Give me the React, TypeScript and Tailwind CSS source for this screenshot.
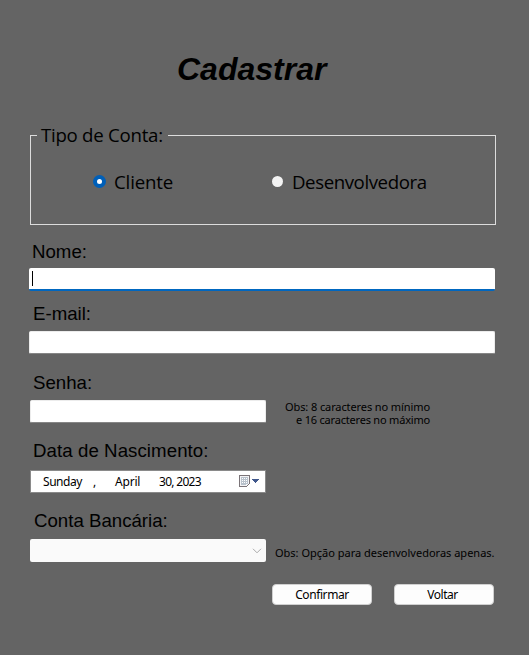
import { ReactNode } from "react";

const arial = "font-['Liberation_Sans',Arial,sans-serif]";
const segoe = "font-['Open_Sans','Noto_Sans',sans-serif]";
const tahoma = "font-['Noto_Sans','Open_Sans',sans-serif]";

function Label({ children, className }: { children: ReactNode; className: string }) {
  return (
    <label className={`${arial} block h-6 whitespace-nowrap text-[18.67px] leading-6 ${className}`}>
      {children}
    </label>
  );
}

function CalendarIcon() {
  return (
    <svg width="22" height="14" viewBox="0 0 22 14" shapeRendering="crispEdges">
      <path d="M1 1H10V9L8 11H1Z" fill="#f4f4f6" />
      <path d="M0 0H11V1H0ZM0 1H1V12H0ZM10 1H11V9H10ZM1 11H8V12H1ZM8 10H9V11H8ZM9 9H10V10H9Z" fill="#7b7478" />
      <path d="M2 2H9V9H7V10H2Z" fill="#b9c2cc" />
      <path d="M3 3H4V4H3ZM5 3H6V4H5ZM7 3H8V4H7ZM3 5H4V6H3ZM5 5H6V6H5ZM7 5H8V6H7ZM3 7H4V8H3ZM5 7H6V8H5ZM7 7H8V8H7Z" fill="#fff" />
      <path d="M13 4H20V5H13ZM14 5H19V6H14ZM15 6H18V7H15ZM16 7H17V8H16Z" fill="#40588c" />
    </svg>
  );
}

export default function App() {
  return (
    <main className="flex h-[655px] w-[529px] flex-col overflow-hidden bg-[#646464] text-black">
      <h1 className={`${arial} ml-[177px] mt-[49px] h-10 text-[32px] font-bold italic leading-10`}>
        Cadastrar
      </h1>

      <section className="ml-[30px] mt-[34px] w-[466px]">
        <div className="flex h-6 items-center">
          <span className="mt-[12px] h-[12px] w-[7px] border-l border-t border-[#dcdcdc]" />
          <span className={`${segoe} w-[131px] whitespace-nowrap pl-1 text-[18.67px] leading-6 tracking-[-0.27px]`}>
            Tipo de Conta:
          </span>
          <span className="mt-[12px] h-[12px] flex-1 border-r border-t border-[#dcdcdc]" />
        </div>
        <div className={`${segoe} flex h-[78px] border-x border-b border-[#dcdcdc] pt-[23px] text-[18.67px] leading-6`}>
          <div className="ml-[62px] flex h-6 w-[178px]">
            <span className="mt-[5px] flex size-[13px] items-center justify-center rounded-full bg-[#005fb8]">
              <span className="size-[5px] rounded-full bg-white" />
            </span>
            <span className="ml-[8px] tracking-[-0.15px]">Cliente</span>
          </div>
          <div className="flex h-6">
            <span className="ml-[1px] mt-[6px] size-[11px] rounded-full bg-[#f3f3f3]" />
            <span className="ml-[9px] tracking-[-0.42px]">Desenvolvedora</span>
          </div>
        </div>
      </section>

      <Label className="ml-8 mt-[15px]">Nome:</Label>
      <div className="ml-[29px] mt-[4px] h-[23px] w-[466px] rounded-[2px] border-b-2 border-[#0067c0] bg-white pl-[3px] pt-[3px]">
        <div className="h-[15px] w-px bg-black" />
      </div>

      <Label className="ml-[33px] mt-[11px]">E-mail:</Label>
      <div className="ml-[29px] mt-[5px] h-[23px] w-[466px] rounded-[2px] border border-[#ececec] border-b-[#868686] bg-white" />

      <Label className="ml-[33px] mt-[17px]">Senha:</Label>
      <div className="ml-[30px] mt-[5px] flex h-[28px]">
        <div className="h-[23px] w-[236px] rounded-[2px] border border-[#ececec] border-b-[#868686] bg-white" />
        <div className={`${tahoma} ml-[19px] flex flex-col whitespace-nowrap text-[11px] leading-[13px]`}>
          <span className="tracking-[-0.1px]">Obs: 8 caracteres no mínimo</span>
          <span className="ml-[11px] tracking-[-0.2px]">e 16 caracteres no máximo</span>
        </div>
      </div>

      <Label className="ml-[33px] mt-[11px] tracking-[0.07px]">Data de Nascimento:</Label>
      <div className={`${tahoma} ml-[30px] mt-[7px] flex h-[23px] w-[236px] border border-[#8a8a8a] bg-white pl-[12px] text-[12px] leading-[22px]`}>
        <span className="w-[50px] tracking-[-0.45px]">Sunday</span>
        <span className="w-[22px]">,</span>
        <span className="w-[44px] tracking-[-0.2px]">April</span>
        <span className="w-[80px] whitespace-nowrap tracking-[-0.7px]">30, 2023</span>
        <span className="mt-[4px]"><CalendarIcon /></span>
      </div>

      <Label className="ml-[34px] mt-[16px]">Conta Bancária:</Label>
      <div className="ml-[30px] mt-[6px] flex h-[23px]">
        <div className="flex w-[236px] justify-end rounded-[2px] bg-[#fafafa] pr-[4px] pt-[9px]">
          <svg width="10" height="6" viewBox="0 0 10 6" fill="none" stroke="#aaa">
            <path d="M1 .8 5 4.8 9 .8" />
          </svg>
        </div>
        <p className={`${tahoma} ml-[9px] whitespace-nowrap pt-[5px] text-[11px] leading-[18px]`}>
          Obs: Opção para desenvolvedoras apenas.
        </p>
      </div>

      <div className={`${tahoma} ml-[272px] mt-[22px] flex gap-[22px] text-[12px]`}>
        <button className="h-[21px] w-[100px] rounded-[4px] border border-[#d0d0d0] bg-[#fdfdfd] leading-[19px] tracking-[-0.4px]">Confirmar</button>
        <button className="h-[21px] w-[100px] rounded-[4px] border border-[#d0d0d0] bg-[#fdfdfd] pr-[3px] leading-[19px] tracking-[-0.5px]">Voltar</button>
      </div>
    </main>
  );
}
